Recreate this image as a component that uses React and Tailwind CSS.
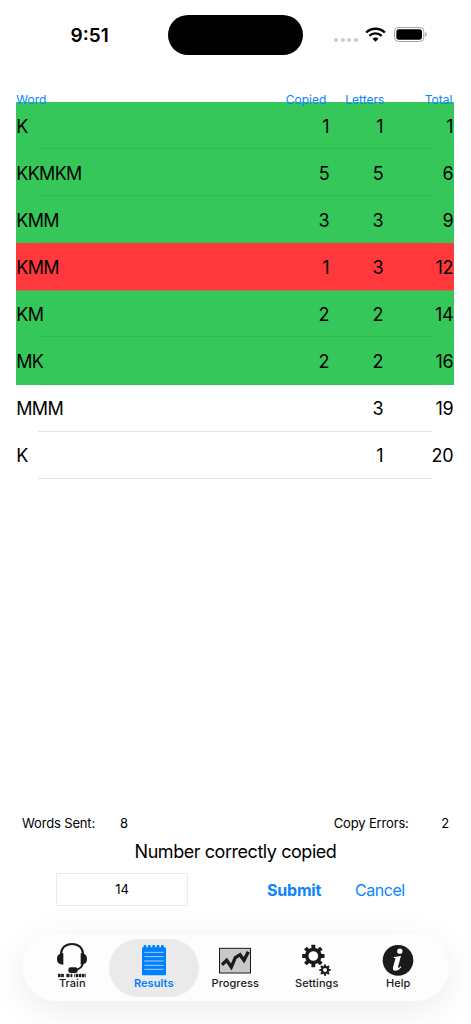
import clsx from 'clsx'

const rows = [
  { word: 'K', copied: 1, letters: 1, total: 1, status: 'ok' },
  { word: 'KKMKM', copied: 5, letters: 5, total: 6, status: 'ok' },
  { word: 'KMM', copied: 3, letters: 3, total: 9, status: 'ok' },
  { word: 'KMM', copied: 1, letters: 3, total: 12, status: 'error' },
  { word: 'KM', copied: 2, letters: 2, total: 14, status: 'ok' },
  { word: 'MK', copied: 2, letters: 2, total: 16, status: 'ok' },
  { word: 'MMM', letters: 3, total: 19 },
  { word: 'K', letters: 1, total: 20 },
]

// [x, width] of each block in the morse strip under the headset
const morse = [[9, 8], [18.5, 8], [34, 8], [43.5, 3], [48, 4], [58, 3], [63, 7], [72, 7], [81, 7], [89, 3]]

function HeadsetIcon() {
  return (
    <svg className="h-9 w-[34px]" viewBox="0 0 102 108" fill="none" stroke="#1a1a1a">
      <path d="M18 37C18 18 31 6 51 6s33 12 33 31" strokeWidth="6" />
      <path d="M84 60c-1 14-10 23-26 24" strokeWidth="5.5" />
      <g fill="#1a1a1a" stroke="none">
        <path d="M25 34v34c-12 0-19-6-19-17s7-17 19-17zM77 34v34c12 0 19-6 19-17s-7-17-19-17z" />
        <rect x="40" y="76" width="28" height="17" rx="7" />
        {morse.map(([x, w]) => (
          <rect key={x} x={x} y="95.5" width={w} height="10" />
        ))}
      </g>
    </svg>
  )
}

function NotepadIcon() {
  return (
    <svg className="h-9 w-[34px]" viewBox="0 0 102 108" fill="#0080ff">
      <rect x="15" y="16" width="72" height="84" rx="4" />
      {[20, 33, 46, 59, 72].map((x) => (
        <rect key={x} x={x} y="9" width="8" height="12" rx="2" />
      ))}
      {[31, 44, 57, 70, 82].map((y) => (
        <path key={y} d={`M22 ${y}h58`} stroke="#c4dcf7" strokeWidth="2.6" />
      ))}
    </svg>
  )
}

function ChartIcon() {
  return (
    <svg className="h-9 w-[34px]" viewBox="0 0 102 108" fill="none" stroke="#1a1a1a">
      <rect x="4.5" y="19" width="93" height="74" fill="#c8c8c8" strokeWidth="3" />
      <path d="M12 68l14-13 14 20 12-28 14-9 12 17 13-26" strokeWidth="10" />
    </svg>
  )
}

const teeth = [0, 45, 90, 135, 180, 225, 270, 315]

function Gear({ x, y, r, hole, tooth }) {
  return (
    <g transform={`translate(${x} ${y})`}>
      <circle r={(r + hole) / 2} fill="none" stroke="#1a1a1a" strokeWidth={r - hole} />
      {teeth.map((a) => (
        <rect
          key={a}
          x={-tooth / 2}
          y={-r - tooth * 0.75}
          width={tooth}
          height={tooth}
          rx={tooth * 0.12}
          fill="#1a1a1a"
          transform={`rotate(${a})`}
        />
      ))}
    </g>
  )
}

function GearsIcon() {
  return (
    <svg className="h-9 w-[34px]" viewBox="0 0 102 108">
      <Gear x={40} y={42} r={25} hole={14.5} tooth={11.5} />
      <Gear x={75} y={84} r={12} hole={6} tooth={6.5} />
    </svg>
  )
}

function InfoIcon() {
  return (
    <svg className="h-9 w-[34px]" viewBox="0 0 102 108">
      <circle cx="51" cy="55" r="46" fill="#1a1a1a" />
      <circle cx="56.5" cy="27.5" r="8" fill="#fdfdfd" />
      <path
        d="M39 45c8-1 15-3 21-4L51 75c-1 4 2 4 8-2l2 3c-8 9-15 11-20 10-5-1-6-5-5-10l7-25c1-3-1-3-5-3z"
        fill="#fdfdfd"
      />
    </svg>
  )
}

const tabs = [
  { label: 'Train', Icon: HeadsetIcon },
  { label: 'Results', Icon: NotepadIcon, active: true },
  { label: 'Progress', Icon: ChartIcon },
  { label: 'Settings', Icon: GearsIcon },
  { label: 'Help', Icon: InfoIcon },
]

function StatusBar() {
  return (
    <div className="flex h-[93px] shrink-0 items-start pt-[15px]">
      <div className="ml-[70.5px] w-[97.5px] pt-[7px] text-[19px] leading-7 font-semibold">9:51</div>
      <div className="h-[39.5px] w-[134.5px] rounded-full bg-black" />
      <div className="mt-[23px] ml-[31.5px] flex gap-[2.5px]">
        {[0, 1, 2, 3].map((i) => (
          <span key={i} className="size-1 rounded-full bg-[#cbcbcb]" />
        ))}
      </div>
      <svg className="mt-[12px] ml-[7px] h-[15px] w-[21px]" viewBox="0 0 63 45" fill="none" stroke="#000">
        <path d="M3.5 16.5C19 1.5 44 1.5 59.5 16.5" strokeWidth="7" />
        <path d="M13 26.5c10-10 27-10 37 0" strokeWidth="7" />
        <path d="M31.5 44l-9-9c5-5 13-5 18 0z" fill="#000" stroke="none" />
      </svg>
      <svg className="mt-[12px] ml-[8px] h-[15px] w-[34px]" viewBox="0 0 102 45">
        <rect x="1.5" y="1.5" width="88" height="42" rx="12" fill="none" stroke="#a3a3a3" strokeWidth="3" />
        <rect x="7" y="7" width="77" height="31" rx="8" />
        <path d="M94 16c6 2 6 11 0 13z" fill="#a3a3a3" />
      </svg>
    </div>
  )
}

function Row({ word, copied, letters, total, status }) {
  return (
    <div
      className={clsx(
        'relative flex h-[47.1px] items-center pt-[2px] text-[18px] leading-6 tracking-[-0.3px]',
        status === 'ok' && 'bg-[#35c759]',
        status === 'error' && 'bg-[#ff383c]',
      )}
    >
      <span className="w-[232px] tracking-[-0.7px]">{word}</span>
      <span className="w-[81px] text-right">{copied}</span>
      <span className="w-[54px] text-right">{letters}</span>
      <span className="w-[70px] text-right">{total}</span>
      <span
        className={clsx(
          'absolute h-px',
          status === 'error' ? 'inset-x-0 -bottom-px z-10 bg-[#8d8a49]' : 'right-[21.5px] bottom-0 left-[21.5px]',
          status === 'ok' && 'bg-black/[0.06]',
          !status && 'bg-[#e6e6e6]',
        )}
      />
    </div>
  )
}

export default function App() {
  return (
    <div className="flex h-[1024px] w-[471px] flex-col overflow-hidden bg-white font-['Inter',sans-serif] text-black">
      <StatusBar />

      <div className="mx-[16.3px] w-[437.4px]">
        <div className="relative z-10 flex h-[9px] text-[12px] leading-[14px] text-[#0a84ff]">
          <span className="w-[232px]">Word</span>
          <span className="w-[78px] text-right">Copied</span>
          <span className="w-[58px] text-right">Letters</span>
          <span className="w-[68px] text-right">Total</span>
        </div>
        {rows.map((row, i) => (
          <Row key={i} {...row} />
        ))}
      </div>

      <div className="mt-auto flex h-4 shrink-0 items-center px-[22px] text-[13px] tracking-[-0.15px]">
        <span>Words Sent:</span>
        <span className="ml-[25px]">8</span>
        <span className="ml-auto">Copy Errors:</span>
        <span className="ml-[32.5px]">2</span>
      </div>
      <div className="mt-[8px] text-center text-[18px] leading-6 tracking-[-0.45px]">Number correctly copied</div>
      <div className="mt-[9px] flex h-[33px] shrink-0 items-center pl-[56px]">
        <div className="flex h-[33px] w-[132px] items-center justify-center border border-[#ebebeb] text-[13px]">14</div>
        <button type="button" className="ml-[79px] w-[55px] text-left text-[16px] leading-6 font-bold tracking-[-0.2px] text-[#0a84ff]">
          Submit
        </button>
        <button type="button" className="ml-[33px] text-[16px] leading-6 tracking-[-0.45px] text-[#0a84ff]">
          Cancel
        </button>
      </div>

      <div className="mx-[22px] mt-[28px] mb-[23px] flex h-[67px] shrink-0 items-center rounded-full bg-[#fdfdfd] px-[5px] shadow-[0_8px_36px_rgba(0,0,0,0.08)]">
        {tabs.map(({ label, Icon, active }) => (
          <div key={label} className="flex w-[81.5px] justify-center first:ml-[4.5px]">
            <div
              className={clsx(
                'flex h-[58px] w-[90px] shrink-0 flex-col items-center rounded-full pt-[3px] text-[11px] leading-[12px] tracking-[0.05px]',
                active ? 'bg-[#eaeaea] font-semibold text-[#0080ff]' : 'font-medium text-[#1a1a1a]',
              )}
            >
              <Icon />
              <span className="-mt-px">{label}</span>
            </div>
          </div>
        ))}
      </div>
    </div>
  )
}
